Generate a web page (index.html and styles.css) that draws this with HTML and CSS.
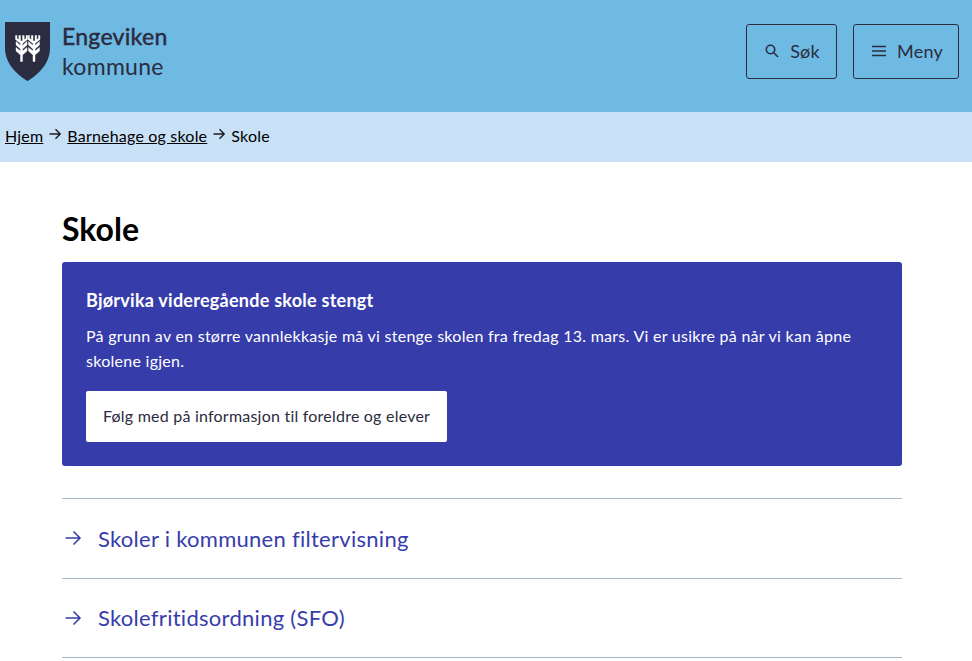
FILE: index.html
```html
<!DOCTYPE html>
<html lang="no">
<head>
<meta charset="utf-8">
<title>Skole</title>
<link rel="stylesheet" href="styles.css">
</head>
<body>
<header class="site-header">
  <a class="brand" href="#">
    <svg class="crest" viewBox="0 0 45 60" width="45" height="60" aria-hidden="true">
      <path d="M0 0H45V26C45 41 34 52 22.5 59C11 52 0 41 0 26Z" fill="#2c2c40"/>
      <g class="wheat">
        <path d="M17.5 39.5H15.5V33L11 29V25.5L15.5 29V27L11 23V19.5L15.5 23.5V21.5L10.5 17.5V13.5H12V16.5L13.8 17.6V13.5H15.5V19H17.5V13.5H19.2V17.6L21 16.5V13.5H22.5V17.5L17.5 21.5V23.5L22 19.5V23L17.5 27V29L22 25.5V29L17.5 33Z"/>
        <path d="M30 39.5H28V33L23.5 29V25.5L28 29V27L23.5 23V19.5L28 23.5V21.5L23 17.5V13.5H24.5V16.5L26.3 17.6V13.5H28V19H30V13.5H31.7V17.6L33.5 16.5V13.5H35V17.5L30 21.5V23.5L34.5 19.5V23L30 27V29L34.5 25.5V29L30 33Z"/>
      </g>
    </svg>
    <span class="brand-text">
      <span class="brand-name">Engeviken</span>
      <span class="brand-sub">kommune</span>
    </span>
  </a>
  <nav class="header-actions">
    <button class="header-btn btn-search" type="button">
      <svg viewBox="0 0 16 16" width="16" height="16" aria-hidden="true"><circle cx="6.5" cy="6.5" r="4.2" class="icon-line"/><path d="M9.7 9.7L14 14" class="icon-line"/></svg>
      <span>Søk</span>
    </button>
    <button class="header-btn btn-menu" type="button">
      <svg viewBox="0 0 16 16" width="16" height="16" aria-hidden="true"><path d="M1 3.5H15M1 8H15M1 12.5H15" class="icon-line"/></svg>
      <span>Meny</span>
    </button>
  </nav>
</header>
<nav class="breadcrumb">
  <a href="#">Hjem</a>
  <svg class="crumb-arrow" viewBox="0 0 14 14" width="14" height="14" aria-hidden="true"><path d="M1.5 7H12M7.5 2.3L12.2 7L7.5 11.7"/></svg>
  <a href="#">Barnehage og skole</a>
  <svg class="crumb-arrow" viewBox="0 0 14 14" width="14" height="14" aria-hidden="true"><path d="M1.5 7H12M7.5 2.3L12.2 7L7.5 11.7"/></svg>
  <span>Skole</span>
</nav>
<main class="content">
  <h1 class="page-title">Skole</h1>
  <section class="alert">
    <h2 class="alert-title">Bjørvika videregående skole stengt</h2>
    <p class="alert-text">På grunn av en større vannlekkasje må vi stenge skolen fra fredag 13. mars. Vi er usikre på når vi kan åpne skolene igjen.</p>
    <a class="alert-btn" href="#">Følg med på informasjon til foreldre og elever</a>
  </section>
  <ul class="link-list">
    <li><a href="#"><svg viewBox="0 0 18 18" width="18" height="18" aria-hidden="true"><path d="M1.5 9H16M9.5 2.5L16 9L9.5 15.5"/></svg><span>Skoler i kommunen filtervisning</span></a></li>
    <li><a href="#"><svg viewBox="0 0 18 18" width="18" height="18" aria-hidden="true"><path d="M1.5 9H16M9.5 2.5L16 9L9.5 15.5"/></svg><span>Skolefritidsordning (SFO)</span></a></li>
  </ul>
</main>
</body>
</html>
```
FILE: styles.css
```css
* { box-sizing: border-box; }
html, body { margin: 0; padding: 0; }
body { font-family: "Lato", "Liberation Sans", sans-serif; color: #2c2c40; background: #fff; }
a { color: inherit; }

.site-header { height: 112px; background: #6fbae3; display: flex; justify-content: space-between; padding: 22px 13px 0 5px; }
.brand { display: flex; text-decoration: none; color: #2c2c40; }
.crest { display: block; }
.wheat path { fill: #fff; stroke: #fff; stroke-width: 0.4; }
.brand-text { display: flex; flex-direction: column; margin-left: 12px; }
.brand-name { font-size: 23px; line-height: 30px; font-weight: 500; letter-spacing: 0.25px; -webkit-text-stroke: 0.3px #2c2c40; margin-top: -1px; }
.brand-sub { font-size: 23px; line-height: 30px; font-weight: 400; letter-spacing: 0.3px; }

.header-actions { display: flex; gap: 16px; align-items: flex-start; padding-top: 2px; }
.header-btn { height: 55px; display: flex; align-items: center; justify-content: center; gap: 10px; background: transparent; border: 1px solid #2c2c40; border-radius: 3px; font: 400 18px "Lato", sans-serif; color: #2c2c40; padding: 0 0 2px; letter-spacing: 0.2px; }
.btn-search { width: 91px; padding-left: 1px; }
.btn-menu { width: 106px; padding-left: 2px; }
.icon-line { fill: none; stroke: #2c2c40; stroke-width: 1.6; }

.breadcrumb { height: 50px; background: #c9e1f6; display: flex; align-items: center; padding: 0 0 3px 5px; font-size: 16px; letter-spacing: 0.2px; color: #000; gap: 5px; }
.crumb-arrow { margin-top: -4px; }
.crumb-arrow path { fill: none; stroke: #1d1d1d; stroke-width: 1.4; }

.content { padding: 48px 70px 0 62px; }
.page-title { margin: 0; font-size: 32px; line-height: 38px; font-weight: 700; color: #000; }
.alert { margin-top: 14px; background: #373cab; color: #fff; border-radius: 3px; padding: 26px 24px 24px; }
.alert-title { margin: 0; font-size: 18px; line-height: 25px; font-weight: 700; letter-spacing: 0.25px; }
.alert-text { margin: 9.5px 0 0; font-size: 16px; line-height: 25px; letter-spacing: 0.27px; }
.alert-btn { display: inline-block; margin-top: 18.5px; background: #fff; color: #2c2c40; border-radius: 2px; padding: 13px 17px 0; height: 51px; width: 361px; font-size: 16px; line-height: 24px; letter-spacing: 0.22px; white-space: nowrap; text-decoration: none; }

.link-list { list-style: none; margin: 32px 0 0; padding: 0; border-top: 1px solid #a4b6cc; }
.link-list li { border-bottom: 1px solid #a4b6cc; height: 79.6px; }
.link-list a { display: flex; align-items: center; height: 78.6px; padding-bottom: 0.4px; color: #373cab; text-decoration: none; font-size: 22px; gap: 16px; letter-spacing: 0.28px; }
.link-list svg { flex: none; margin-left: 2px; }
.link-list svg path { fill: none; stroke: #373cab; stroke-width: 1.5; }
```
